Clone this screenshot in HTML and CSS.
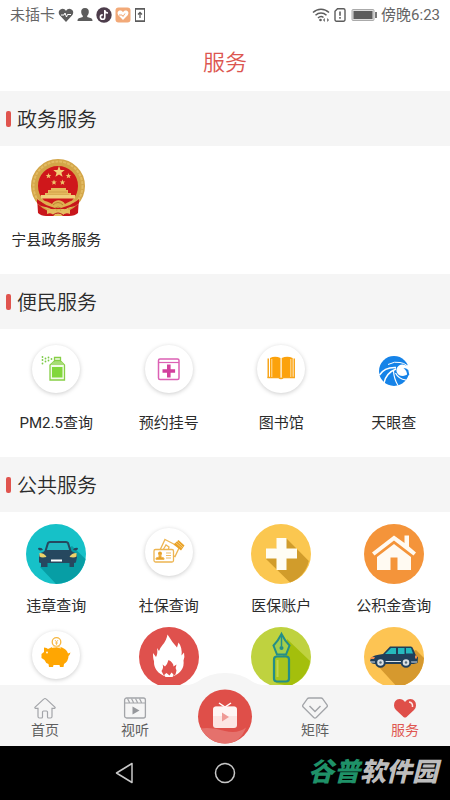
FILE: index.html
```html
<!DOCTYPE html>
<html lang="zh-CN">
<head>
<meta charset="utf-8">
<meta name="viewport" content="width=device-width, initial-scale=1">
<title>服务</title>
<link rel="stylesheet" href="styles.css">
</head>
<body>
<div class="screen">
  <div class="status">
    <div class="status-group">
      <span class="status-text">未插卡</span>
      <svg width="16" height="16" viewBox="0 0 16 16"><path d="M8 15 2 8.500C0 6 .6 3.500 2.500 2.400 4.500 1.300 6.800 1.800 8 4c1.200-2.200 3.500-2.700 5.500-1.600C15.400 3.500 16 6 14 8.500Z" fill="#5c5c5c"/><path d="M3 8h3l1-2 1.500 4L9.500 7.500H13" fill="none" stroke="#fff"/></svg>
      <svg width="16" height="16" viewBox="0 0 16 16"><path d="M8 1c2.800 0 4 1.800 3.800 4.200-.2 1.800-.9 2.800-1.600 3.500v1.200l4 1.400c.8.400 1.300 1.400 1.300 2.700H.5c0-1.300.5-2.300 1.300-2.700l4-1.400V8.700C5.100 8 4.400 7 4.200 5.200 4 2.800 5.200 1 8 1Z" fill="#5c5c5c"/></svg>
      <svg width="16" height="16" viewBox="0 0 16 16"><circle cx="8" cy="8" r="7.700" fill="#4d3d4b"/><path d="M8.800 3v7.200a2.200 2.200 0 1 1-2.100-2.300M8.800 3c.2 1.800 1.400 2.900 3.200 3" fill="none" stroke="#fff" stroke-width="1.600"/></svg>
      <svg width="16" height="16" viewBox="0 0 16 16"><rect x=".5" y=".5" width="15" height="15" rx="3" fill="#f2a978"/><path d="M8 13 3.300 8.200C2 6.500 2.500 4.500 4 3.800c1.600-.7 3.200 0 4 1.500.8-1.500 2.400-2.200 4-1.500 1.500.7 2 2.700.7 4.400Z" fill="#fff"/><path d="M4 8h3l1 1.500 2-3" fill="none" stroke="#f2a978"/></svg>
      <svg width="12" height="16" viewBox="0 0 12 16"><rect x="1.500" y="1.500" width="9" height="13" fill="none" stroke="#5c5c5c"/><path d="M1 2h10M1 14h10M6 11V5.500M4 7.500l2-2 2 2" fill="none" stroke="#5c5c5c" stroke-width="1.300"/></svg>
    </div>
    <div class="status-group">
      <svg width="18" height="16" viewBox="0 0 18 16"><g fill="none" stroke="#5c5c5c" stroke-width="1.500"><path d="M1 5.500C5.500 1 12.500 1 17 5.500M3.500 8.200c3.200-3 7.800-3 11 0M6 11c1.800-1.700 4-1.700 5.500-.5"/></g><circle cx="8.500" cy="13" r="1.300" fill="#5c5c5c"/><path d="m11 13 1.800-2v4ZM17 13l-1.800-2v4Z" fill="#5c5c5c"/></svg>
      <svg width="14" height="16" viewBox="0 0 14 16"><path d="M4.500 1.800h6a1.500 1.500 0 0 1 1.500 1.500v9.400a1.500 1.500 0 0 1-1.500 1.500h-7A1.500 1.500 0 0 1 2 12.700V4.300Z" fill="none" stroke="#5c5c5c" stroke-width="1.400"/><path d="M7 4.500v4.200M7 10v1.700" stroke="#5c5c5c" stroke-width="1.600"/></svg>
      <svg width="28" height="16" viewBox="0 0 28 16"><rect x="2" y="2.500" width="22" height="11" rx="1" fill="#ddd" stroke="#aaa"/><rect x="3.500" y="4" width="19" height="8" fill="#5c5c5c"/><path d="M26 5v6" stroke="#777" stroke-width="2"/></svg>
      <span class="status-text">傍晚6:23</span>
    </div>
  </div>

  <header class="title-bar"><h1>服务</h1></header>

  <main class="content">
    <h2 class="section-title">政务服务</h2>
    <div class="services">
      <a class="service" href="#">
        <svg class="service-icon" viewBox="0 0 60 60">
          <path d="M11 39 12 55Q15 58 20 58h23q6 0 9-3l1-16Z" fill="#c8161b"/>
          <circle cx="32" cy="28" r="23.500" fill="#cf171b" stroke="#d3a548" stroke-width="7"/>
          <circle cx="32" cy="28" r="24.500" fill="none" stroke="#e2bb62" stroke-width="2" stroke-dasharray="3 1"/>
          <path d="m33 8 1.500 4 4.200.1-3.300 2.600 1.200 4.100L33 16.500l-3.600 2.300 1.200-4.100-3.300-2.600 4.200-.1Z" fill="#f3ce77"/>
          <path id="star" d="m22.500 15 .8 1.900 2 .1-1.600 1.300.6 2-1.800-1.100-1.800 1.100.6-2-1.600-1.300 2-.1Z" fill="#efc56b"/>
          <use href="#star" x="20"/><use href="#star" x="5.500" y="6.500"/><use href="#star" x="14" y="6.500"/>
          <path d="M25 30h15v2h2v3h3v3H19v-3h3v-3h3Z" fill="#e5ba5d"/><path d="M23 34h18M21 37h22" stroke="#c7953f" stroke-width=".7"/>
          <path d="M15 37h34v3.500H15Z" fill="#f0cf7b"/>
          <path d="M11 41c7 6 10 3 15 6 3-5 10-5 13 0 5-3 8 0 14-6v4c-5 5-9 3-13 6H25c-5-3-9-1-14-6Z" fill="#c8161b"/>
          <path d="M14 42q8 1 12 4c3-5 10-5 13 0q4-3 11-4-3 4-9 6l-6 2h-6l-6-2q-6-2-9-6Z" fill="#dfaf50"/>
          <path d="M27 47q5-5 10 0M29 50q3-2 6 0" fill="none" stroke="#b98231"/>
          <path d="M21 52q5-2 8 1h6q4-3 9-1v4q-5-2-8 2h-8q-2-4-7-2Z" fill="#e5bd61"/><path d="M27 57q5-4 10 0" fill="none" stroke="#b8171a"/>
        </svg>
        <span>宁县政务服务</span>
      </a>
    </div>

    <h2 class="section-title">便民服务</h2>
    <div class="services">
      <a class="service" href="#">
        <svg class="service-icon" viewBox="0 0 60 60">
          <circle class="disc" cx="30" cy="28" r="24"/>
          <path d="M28.500 16.500h6v3h-6ZM28.500 20l-4.500 4v15h14.500V24l-4-4Z" fill="#f3fbe9" stroke="#86cf45" stroke-width="1.300"/><path d="M27 21h9l2 3H24.500Z" fill="#a7dd76"/><path d="M26 26h10.500v10.500H26Z" fill="#82d73c"/>
          <g fill="#7ccb48"><circle cx="16.500" cy="16" r=".9"/><circle cx="16.500" cy="19" r=".9"/><circle cx="16.500" cy="22.500" r=".9"/><circle cx="19.500" cy="17.500" r=".9"/><circle cx="19.500" cy="20.500" r=".9"/><circle cx="22.500" cy="16.500" r=".9"/><circle cx="22.500" cy="19.500" r=".9"/><circle cx="25.500" cy="18" r=".9"/></g>
        </svg>
        <span>PM2.5查询</span>
      </a>
      <a class="service" href="#">
        <svg class="service-icon" viewBox="0 0 60 60">
          <circle class="disc" cx="30" cy="28" r="24"/>
          <rect x="19.500" y="18" width="20.500" height="20.500" rx="1.500" fill="#fff" stroke="#dc60b4" stroke-width="1.500"/><path d="M19.500 21.500H40" stroke="#dc60b4" stroke-width="1.200"/><path d="M29.800 23.500v13M23.500 30h12.600" stroke="#d2409d" stroke-width="3.600"/>
        </svg>
        <span>预约挂号</span>
      </a>
      <a class="service" href="#">
        <svg class="service-icon" viewBox="0 0 60 60">
          <circle class="disc" cx="30" cy="28" r="24"/>
          <path d="M16.500 17.500h1.500V37h-1.500ZM42.500 17.500H44V37h-1.500Z" fill="#f8a51b"/><path d="M19 17q5-2.500 10.500 0v20q-5-1.500-10.500 0ZM30.700 17q5.500-2.500 11 0v20q-5.500-1.500-11 0Z" fill="#fca20c"/><path d="M16.500 36.500h11q2.500 2 5 0H44" fill="none" stroke="#f8a51b" stroke-width="1.500"/><path d="M20.800 18v18M39.800 18v18" stroke="#ffe0a6"/>
        </svg>
        <span>图书馆</span>
      </a>
      <a class="service" href="#">
        <svg class="service-icon" viewBox="0 0 60 60">
          <circle cx="30" cy="30" r="15" fill="#1683e8"/>
          <path d="M46 23.500 42 24.500q-4-2-7 0-3 2.200-2.500 6 1.500 4.500 6.500 4.500 4-.5 7-4.500Z" fill="#fff"/>
          <path d="M39.500 27q3 0 4.800 2l1 5-2.300 1q.5-5-3.500-8Z" fill="#1683e8"/>
          <path d="M24 23.500q7-3.500 12-2 4 .5 7 3" fill="none" stroke="#fff"/>
          <path d="M15.500 34q5-8 16.500-7.500M20 42q2-10 12-14" fill="none" stroke="#fff" stroke-width="1.500"/>
          <path d="M29.500 30q.5 8 4.500 14.500M31.500 32q3 6 10.500 7" fill="none" stroke="#fff" stroke-width="1.200"/>
        </svg>
        <span>天眼查</span>
      </a>
    </div>

    <h2 class="section-title">公共服务</h2>
    <div class="services">
      <a class="service" href="#">
        <svg class="service-icon" viewBox="0 0 60 60">
          <circle cx="30" cy="30" r="30" fill="#16c1c8"/>
          <path d="M14 43 30 59.900A30 30 0 0 0 59.500 35L46 22Z" fill="#079ea5"/>
          <path d="M19.500 27 22 19q.5-1 2-1h16q1.500 0 2 1l2.500 8" fill="#20b8c1" stroke="#26485f" stroke-width="2"/>
          <path d="M13 33q0-4 4-5l3-2h24l3 2q4 1 4 5l-1 5q0 1-2 1v4h-4.500v-4h-22v4H15v-4q-2 0-2-1Z" fill="#26485f"/>
          <path d="M12 24q4-1 5 2l-3 .5q-2-.5-2-2.500ZM52 24q-4-1-5 2l3 .5q2-.5 2-2.500Z" fill="#26485f"/>
          <path d="M13.500 29q5 0 7 4-5 1-7-.5ZM50.500 29q-5 0-7 4 5 1 7-.5Z" fill="#edd36a"/><path d="M25 35.500h11v2H25Z" fill="#fff"/>
        </svg>
        <span>违章查询</span>
      </a>
      <a class="service" href="#">
        <svg class="service-icon" viewBox="0 0 60 60">
          <circle class="disc" cx="30" cy="28" r="24"/>
          <g fill="#fff" stroke="#edb552" stroke-width="1.300"><path d="m26 15.500 14.500 7.500-4.500 9.500-14.500-7.500Z"/><path d="m24 26 3-5 3 2-1 4" /><rect x="15" y="25.500" width="19.500" height="12.500" rx="1.500"/></g>
          <path d="m39.500 16 6 5.500-3.500 5-7.500-6Z" fill="#e9a227"/><path d="m38 17 6 6m-7-4 6 5" stroke="#f9d693" stroke-width=".7"/>
          <circle cx="21" cy="29.500" r="2" fill="#e9a227"/><path d="M20 31h2v2l3 1v1.500h-8V34l3-1ZM27 29h5M27 31.500h5M27 34h5" fill="#e9a227" stroke="#edb552" stroke-width=".9"/>
        </svg>
        <span>社保查询</span>
      </a>
      <a class="service" href="#">
        <svg class="service-icon" viewBox="0 0 60 60">
          <circle cx="30" cy="30" r="30" fill="#fbc750"/>
          <path d="m35 14 22.800 23A30 30 0 0 1 39 58.500L15 35Z" fill="#d19c2b"/>
          <path d="M25.500 14h10v10.500H46v10H35.500V46h-10V34.500H15v-10h10.500Z" fill="#fffdf4"/>
        </svg>
        <span>医保账户</span>
      </a>
      <a class="service" href="#">
        <svg class="service-icon" viewBox="0 0 60 60">
          <circle cx="30" cy="30" r="30" fill="#f4943a"/>
          <path d="M30 11.500 40.500 19v-7.500H45V22.500l7 6-2.500 3L30 16.500 10.500 31.500l-2.500-3Z" fill="#fffaf2"/>
          <path d="m30 20 17 13v13H33.500V33.500h-7V46H13V33Z" fill="#fffaf2"/>
        </svg>
        <span>公积金查询</span>
      </a>
      <a class="service" href="#">
        <svg class="service-icon" viewBox="0 0 60 60">
          <circle class="disc" cx="30" cy="28" r="24"/>
          <circle cx="30.500" cy="15" r="4.300" fill="#fff" stroke="#f6b640" stroke-width="1.300"/><path d="m29 13 1.500 2 1.500-2m-1.500 2v3m-1.500-2h3" stroke="#f6b640" fill="none" stroke-width=".8"/>
          <path d="M18 20.500q3 0 4 1.500 7-4.500 14-1.500 5 2 6 6l2.500-1-1 2.500-1 1q0 5-4.500 8l-.5 3h-3.500l-.5-2h-6l-.5 2H23l-.5-3q-3-1-4-4L15.500 31v-4l2.500-2Z" fill="#ffa602"/><circle cx="21" cy="25.500" r=".9" fill="#fff"/><path d="M26 20.500q5-1.500 9 .5" fill="none" stroke="#fff3d5"/>
        </svg>
      </a>
      <a class="service" href="#">
        <svg class="service-icon" viewBox="0 0 60 60">
          <circle cx="30" cy="30" r="30" fill="#df514d"/>
          <path d="M28.500 7.500q-1 6-5 10.500-2.500 3-3.500 6l-2-3q1 6-1 9l-3-4q0 6 1 8-.5 11 11.500 15.500h7q12.500-5 11-16 1.500-3 .5-8l-2.500 3q1-8-3-13l-1.500 5Q33 15 28.500 7.500Z" fill="#fff"/>
          <path d="M29.500 33q-1 4-3.500 6.500l-2.500-2q1.500 3-1 6.500l2 4 3.500 1.500h5l3.500-2 1-4q-1.500-3 0-6l-3 2q0-4-5-6.500Z" fill="#df514d"/><path d="m25.500 47.500 1 2.500h7l1-2.500-2-2-2 3-3-2.500Z" fill="#fff"/>
        </svg>
      </a>
      <a class="service" href="#">
        <svg class="service-icon" viewBox="0 0 60 60">
          <circle cx="30" cy="30" r="30" fill="#bfd23f"/>
          <path d="m36 12 23 22A30 30 0 0 1 38 59l-13-3Z" fill="#a4bf0c"/>
          <path d="M30.500 7q-3.500 7-8 11.500l3.500 9h9l3.500-9Q34 14 30.500 7Z" fill="#a4ce4b" stroke="#238e88" stroke-width="2"/><path d="M30.500 9v10" stroke="#238e88" stroke-width="1.500"/><circle cx="30.500" cy="21" r="2" fill="#238e88"/>
          <rect x="23" y="29.500" width="15" height="25" rx="3" fill="#a9c51c" stroke="#238e88" stroke-width="2.200"/><path d="M26.500 33v17" stroke="#c3d54e" stroke-width="2"/>
        </svg>
      </a>
      <a class="service" href="#">
        <svg class="service-icon" viewBox="0 0 60 60">
          <circle cx="30" cy="30" r="30" fill="#fdc453"/>
          <path d="m13 38 20 21.800A30 30 0 0 0 60 31l-8-8Z" fill="#d6992e"/>
          <path d="m19 27 7-7.500h21q1.500 0 2.500 3l2 5 2.500 3-.5 5.500-4 1H11q-4 0-5-3l1-3q2-3 12-4Z" fill="#203f5a"/>
          <path d="m21 27 6-6h5v6ZM34 21h6.500v6H34ZM42 21h5l2 5.500h-7Z" fill="#26b9bd"/>
          <path d="M7 30h4l-1 2H6.500M51 28.500h2v3h-2Z" fill="#f18b4c"/><path d="M21 34.500h16M6 35h5M47 35h6" stroke="#dbe4e8"/>
          <g fill="#d9dfe2" stroke="#203f5a" stroke-width="2"><circle cx="16.500" cy="35.500" r="4.300"/><circle cx="42" cy="35.500" r="4.300"/></g><g fill="#536c7d"><circle cx="16.500" cy="35.500" r="1.200"/><circle cx="42" cy="35.500" r="1.200"/></g>
        </svg>
      </a>
    </div>
  </main>

  <nav class="tabs">
    <a class="tab" href="#">
      <svg width="24" height="24" viewBox="0 0 24 24"><path d="M12 2.500q.7 0 1.300.6l8.600 8q.8.900-.4 1.200H19v8.200q0 1.500-1.500 1.500h-2q-1 0-1-1V16q0-1-1-1h-3q-1 0-1 1v5q0 1-1 1h-2Q5 22 5 20.500v-8.200H2.500q-1.200-.3-.4-1.200l8.600-8q.6-.6 1.300-.6Z" fill="none" stroke="#a3a5a9" stroke-width="1.200"/></svg>
      <span>首页</span>
    </a>
    <a class="tab" href="#">
      <svg width="24" height="24" viewBox="0 0 24 24"><rect x="1.600" y="2" width="20.800" height="20" rx="2" fill="none" stroke="#a3a5a9" stroke-width="1.300"/><path d="M2 7h20M4.500 2.500l2 4M8.500 2.500l2 4M12.500 2.500l2 4M16.500 2.500l2 4" stroke="#a3a5a9" stroke-width="1.200"/><path d="m9.500 10.500 7 4-7 4Z" fill="#96989c"/></svg>
      <span>视听</span>
    </a>
    <a class="tab" href="#">
      <svg class="tab-center" width="110" height="73" viewBox="0 0 110 73">
        <path d="M8 13Q20 13 27 9 39 0 55 0T83 9q7 4 19 4v60H8Z" fill="#f5f5f5"/>
        <circle cx="55" cy="43.500" r="27" fill="#df4f49"/>
        <path d="M30.800 55.500Q42 54 55 58q13 3 21-3.500Q70 70.500 55 70.500T30.800 55.500Z" fill="#e5716c"/>
        <path d="m49 30 6 4 6-4" fill="none" stroke="#fff" stroke-width="1.500"/>
        <rect x="43" y="33.500" width="24" height="21.500" rx="3" fill="#fce5e3"/><path d="M43 38q0-4.500 3-4.500h18q3 0 3 4.500v5H43Z" fill="#fff" opacity=".6"/><path d="m52 39.500 7 4.500-7 4.500Z" fill="#ef9a96"/>
      </svg>
    </a>
    <a class="tab" href="#">
      <svg width="26" height="24" viewBox="0 0 26 24"><path d="M7 2h12q1 0 1.700.8l4.300 6q.8 1.200-.2 2.200L14.300 21.500q-1.300 1-2.600 0L1.200 11q-1-1 -.2-2.200l4.300-6Q6 2 7 2Z" fill="none" stroke="#a3a5a9" stroke-width="1.300"/><path d="m7.500 10 5.500 5.500L18.500 10" fill="none" stroke="#a3a5a9" stroke-width="1.500"/></svg>
      <span>矩阵</span>
    </a>
    <a class="tab tab-active" href="#" aria-current="page">
      <svg width="24" height="24" viewBox="0 0 24 24"><path d="M12 6Q10 3 6.500 3 1 3.500 1 9.500q0 2.500 2 4.500l7.500 7q1.500 1.200 3 0l7.500-7q2-2 2-4.500Q23 3.500 17.500 3 14 3 12 6Z" fill="#df4f49"/><path d="M16 6q4 .5 3.500 5" fill="none" stroke="#fce6e4" stroke-width="1.500"/></svg>
      <span>服务</span>
    </a>
  </nav>

  <div class="system-nav">
    <button class="system-key"><svg width="22" height="24" viewBox="0 0 22 24"><path d="M18 2.500v19L2.500 12Z" fill="none" stroke="#c8c8c8" stroke-width="1.500" stroke-linejoin="round"/></svg></button>
    <button class="system-key"><svg width="24" height="24" viewBox="0 0 24 24"><circle cx="12" cy="12" r="9.500" fill="none" stroke="#c8c8c8" stroke-width="1.500"/></svg></button>
    <div class="watermark"><span>谷普</span>软件园</div>
  </div>
</div>
</body>
</html>
```
FILE: styles.css
```css
* {
  box-sizing: border-box;
}

body {
  margin: 0;
  background: #fff;
  color: #2b2b2b;
  font-family: Roboto, "Noto Sans CJK SC", sans-serif;
}

svg {
  display: block;
  flex: none;
}

a {
  color: inherit;
  text-decoration: none;
}

.screen {
  display: flex;
  flex-direction: column;
  height: 100vh;
}

.status {
  display: flex;
  flex: none;
  justify-content: space-between;
  padding: 3px 10px 4px;
}

.status-group {
  display: flex;
  align-items: center;
  gap: 3px;
}

.status-text {
  color: #666;
  font-size: 15px;
  line-height: 24px;
}

.title-bar {
  flex: none;
  padding: 16px 0 12px;
  text-align: center;
}

h1 {
  margin: 0;
  color: #dc5650;
  font-size: 22px;
  font-weight: 350;
  line-height: 32px;
}

.content {
  flex: 1;
  min-height: 0;
  overflow: hidden;
}

.section-title {
  display: flex;
  align-items: center;
  gap: 6px;
  margin: 0;
  padding: 13px 6px 10px;
  background: #f5f5f5;
  font-size: 20px;
  font-weight: 350;
  line-height: 32px;
}

.section-title::before {
  content: "";
  width: 5px;
  height: 16px;
  margin-bottom: 2px;
  border-radius: 2px;
  background: #e0544e;
}

.services {
  display: grid;
  grid-template-columns: repeat(4, 1fr);
  row-gap: 11px;
  padding: 12px 0 24px;
}

.service {
  display: flex;
  flex-direction: column;
  align-items: center;
  gap: 12px;
  font-size: 15px;
  line-height: 20px;
  white-space: nowrap;
}

.service-icon {
  width: 60px;
  height: 60px;
}

.disc {
  fill: #fff;
  filter: drop-shadow(0 1px 2px rgba(0, 0, 0, 0.2));
}

.tabs {
  display: grid;
  flex: none;
  grid-template-columns: repeat(5, 1fr);
  background: #f5f5f5;
}

.tab {
  position: relative;
  display: flex;
  flex-direction: column;
  align-items: center;
  padding: 11px 0 6px;
  color: #5f5f5f;
  font-size: 14px;
  line-height: 20px;
}

.tab-active {
  color: #df5751;
}

.tab-center {
  position: absolute;
  bottom: 0;
  left: 50%;
  transform: translateX(-50%);
}

.system-nav {
  position: relative;
  display: flex;
  flex: none;
  justify-content: center;
  gap: 60px;
  padding: 7px 0;
  background: #000;
}

.system-key {
  display: flex;
  align-items: center;
  justify-content: center;
  width: 40px;
  height: 40px;
  padding: 0;
  border: 0;
  background: none;
}

.system-key:first-child {
  margin-left: -100px;
}

.watermark {
  position: absolute;
  right: 12px;
  bottom: 10px;
  color: #bdbdbd;
  font-size: 26px;
  font-style: italic;
  font-weight: 900;
  line-height: 36px;
}

.watermark span {
  color: #1f9168;
}
```
